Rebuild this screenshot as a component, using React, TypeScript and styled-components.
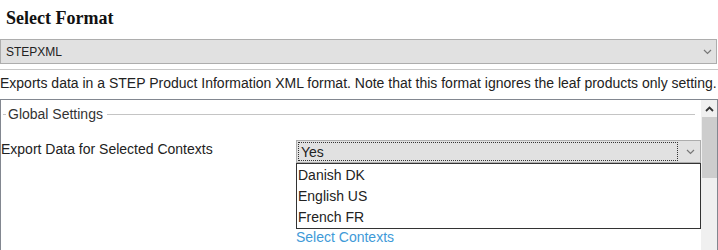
import React from "react";
import styled, { createGlobalStyle } from "styled-components";

const GlobalStyle = createGlobalStyle`
  body {
    margin: 0;
    background: #ffffff;
    font-family: "Liberation Sans", Arial, sans-serif;
    color: #222;
  }
`;

const contexts = ["Danish DK", "English US", "French FR"];

const Chevron: React.FC<{ up?: boolean; color?: string; weight?: number }> = ({ up, color = "#777", weight = 1.2 }) => (
  <svg width="9" height="6" viewBox="0 0 9 6">
    <path
      d={up ? "M1 5 L4.5 1.5 L8 5" : "M1 1 L4.5 4.5 L8 1"}
      fill="none"
      stroke={color}
      strokeWidth={weight}
    />
  </svg>
);

const App: React.FC = () => {
  return (
    <Page>
      <GlobalStyle />
      <Title>Select Format</Title>
      <FormatSelect>
        <SelectText>STEPXML</SelectText>
        <Chevron />
      </FormatSelect>
      <Description>
        Exports data in a STEP Product Information XML format. Note that this format ignores the leaf products only setting.
      </Description>
      <Panel>
        <PanelBody>
          <Legend>
            <LegendTick />
            <LegendText>Global Settings</LegendText>
            <LegendLine />
          </Legend>
          <SettingRow>
            <SettingLabel>Export Data for Selected Contexts</SettingLabel>
            <SettingControl>
              <ValueSelect>
                <FocusBox>Yes</FocusBox>
                <Chevron />
              </ValueSelect>
              <DropList>
                {contexts.map((c) => (
                  <DropItem key={c}>{c}</DropItem>
                ))}
              </DropList>
              <ContextLink>Select Contexts</ContextLink>
            </SettingControl>
          </SettingRow>
        </PanelBody>
        <ScrollBar>
          <ScrollArrow>
            <Chevron up color="#333" weight={1.8} />
          </ScrollArrow>
          <ScrollThumb />
        </ScrollBar>
      </Panel>
    </Page>
  );
};

export default App;

const Page = styled.div`
  width: 718px;
  height: 250px;
  overflow: hidden;
`;

const Title = styled.div`
  font-family: "Liberation Serif", "Times New Roman", serif;
  font-weight: bold;
  font-size: 18px;
  line-height: 21px;
  color: #111;
  padding: 8px 0 0 6px;
  height: 39px;
  box-sizing: border-box;
`;

const FormatSelect = styled.div`
  display: flex;
  align-items: center;
  justify-content: space-between;
  height: 25px;
  box-sizing: border-box;
  width: 717px;
  background: #e1e1e1;
  border: 1px solid #adadad;
  padding: 0 4px 0 5px;
`;

const SelectText = styled.span`
  font-size: 12px;
  color: #222;
`;

const Description = styled.div`
  margin-top: 5px;
  border-top: 1px solid #c8c8c8;
  font-size: 14px;
  line-height: 16px;
  padding: 5px 0 8px 0;
  white-space: nowrap;
  color: #222;
`;

const Panel = styled.div`
  display: flex;
  border: 1px solid #828790;
  border-bottom: none;
  height: 160px;
  box-sizing: border-box;
`;

const PanelBody = styled.div`
  flex: 1;
  display: flex;
  flex-direction: column;
`;

const Legend = styled.div`
  display: flex;
  align-items: center;
  gap: 2px;
  height: 16px;
  margin-top: 6px;
  padding-left: 2px;
  padding-right: 6px;
`;

const LegendTick = styled.div`
  width: 3px;
  height: 1px;
  background: #c4c4c4;
`;

const LegendText = styled.span`
  font-size: 14px;
  color: #333;
  margin-right: 2px;
`;

const LegendLine = styled.div`
  flex: 1;
  height: 1px;
  background: #c4c4c4;
`;

const SettingRow = styled.div`
  display: flex;
  margin-top: 18px;
`;

const SettingLabel = styled.div`
  width: 295px;
  font-size: 14px;
  line-height: 16px;
  padding-top: 1px;
  color: #222;
`;

const SettingControl = styled.div`
  position: relative;
  flex: 1;
  display: flex;
  flex-direction: column;
`;

const ValueSelect = styled.div`
  display: flex;
  align-items: center;
  gap: 8px;
  height: 23px;
  box-sizing: border-box;
  background: #e1e1e1;
  border: 1px solid #adadad;
  padding: 1px 5px 1px 1px;
`;

const FocusBox = styled.div`
  flex: 1;
  height: 100%;
  box-sizing: border-box;
  border: 1px dotted #333;
  font-size: 14px;
  line-height: 19px;
  padding-left: 2px;
  color: #222;
`;

const DropList = styled.div`
  position: absolute;
  top: 23px;
  left: 0;
  right: 0;
  background: #fff;
  border: 1px solid #333;
  padding: 1px 0 0 0;
  z-index: 2;
`;

const DropItem = styled.div`
  font-size: 14px;
  line-height: 21px;
  padding-left: 1px;
  color: #222;
`;

const ContextLink = styled.a`
  margin-top: 66px;
  font-size: 14px;
  line-height: 16px;
  color: #3e9ad8;
  cursor: pointer;
`;

const ScrollBar = styled.div`
  width: 16px;
  background: #f0f0f0;
  display: flex;
  flex-direction: column;
  align-items: center;
`;

const ScrollArrow = styled.div`
  height: 17px;
  display: flex;
  align-items: center;
  justify-content: center;
`;

const ScrollThumb = styled.div`
  width: 15px;
  height: 61px;
  background: #cdcdcd;
`;
